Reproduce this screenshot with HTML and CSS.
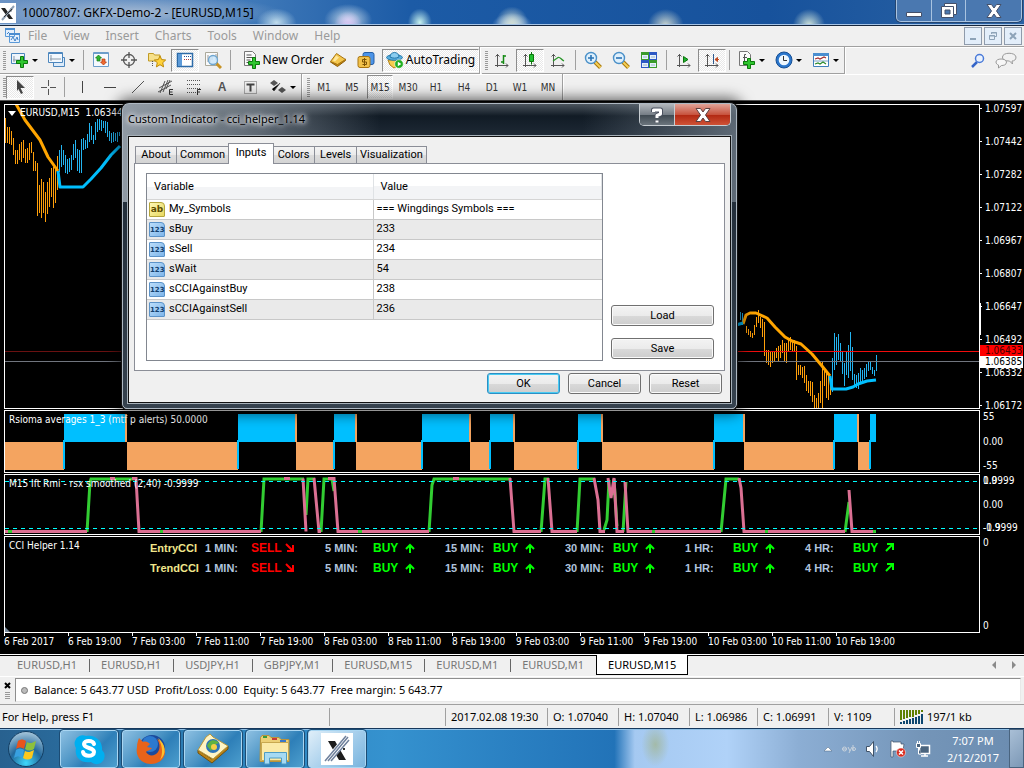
FILE: index.html
```html
<!DOCTYPE html>
<html lang="en">
<head>
<meta charset="utf-8">
<title>10007807: GKFX-Demo-2 - [EURUSD,M15]</title>
<link rel="stylesheet" href="styles.css">
</head>
<body>
<div class="app">
<header class="titlebar">
  <svg class="app-icon" width="16" height="20" viewBox="0 0 16 20"><path fill="#fff" d="M0 0h16v20H0z"/><path fill="#222" d="M1 5h4l8 11H9zM11 5h2l-2 4-2-1z"/><path stroke="#8fa0b4" stroke-width="2" d="M2 17 14 3"/><path stroke="#333" stroke-width="1" d="M4 14 12 6"/></svg>
  <h1 class="title-text">10007807: GKFX-Demo-2 - [EURUSD,M15]</h1>
  <div class="window-buttons">
    <button aria-label="Minimize"><svg width="18" height="16" viewBox="0 0 18 16"><path fill="#fff" stroke="#44506a" d="M1.500 9.500h15v4h-15z"/></svg></button>
    <button aria-label="Restore"><svg width="18" height="16" viewBox="0 0 18 16"><path fill="#fff" stroke="#44506a" fill-rule="evenodd" d="M4.500.500h12v11h-3v3h-12v-11h3zM5 7v4h5V7z"/><path stroke="#44506a" fill="none" d="M4.500 3.500h9v8"/></svg></button>
    <button class="wide" aria-label="Close"><svg width="18" height="16" viewBox="0 0 18 16"><path fill="#fff" stroke="#44506a" d="M2 1.500h4.500L9 5l2.500-3.500H16L11.500 8l4.500 6.500h-4.500L9 11l-2.500 3.500H2L6.500 8z"/></svg></button>
  </div>
</header>

<nav class="menubar">
  <svg class="mdi-icon" width="16" height="16" viewBox="0 0 16 16"><path fill="#e4effc" stroke="#5b9ad8" d="M.500.500h9v8h-9zM4.500 5.500h10v9h-10z"/><path fill="#4a8cd0" d="M0 0h10v2H0zM4 5h11v2H4z"/><path stroke="#3d80c8" fill="none" d="m6 12 2-3 2 4 2-4 1 3M2 6l2-2"/></svg>
  <button>File</button><button>View</button><button>Insert</button><button>Charts</button><button>Tools</button><button>Window</button><button>Help</button>
  <div class="mdi-buttons">
    <button aria-label="Minimize chart"><svg width="10" height="10" viewBox="0 0 10 10"><path stroke="#8da3b8" stroke-width="2" d="M2 8h6"/></svg></button>
    <button aria-label="Restore chart"><svg width="10" height="10" viewBox="0 0 10 10"><path fill="none" stroke="#8da3b8" d="M3.500 3V1.500h5v4H7M1.500 4.500h5v4h-5zM1 5h6M3 2h6"/></svg></button>
    <button aria-label="Close chart"><svg width="10" height="10" viewBox="0 0 10 10"><path stroke="#8da3b8" stroke-width="2" d="m2 2 6 6m0-6L2 8"/></svg></button>
  </div>
</nav>

<div class="toolbar-row">
  <div class="toolbar">
    <i class="grip"></i>
    <button class="tool drop" aria-label="New chart"><svg width="18" height="18" viewBox="0 0 18 18"><path fill="#eef5fc" stroke="#4c86bd" d="M.500 2.500h13v10H.500z"/><path stroke="#8b9aa8" d="M3 5v6M2 9h10"/><path fill="#2fc62f" stroke="#0b7a0b" d="M9.500 5.500h3v4h4v3h-4v4h-3v-4h-4v-3h4z"/></svg><i class="caret"></i></button>
    <button class="tool drop" aria-label="Profiles"><svg width="18" height="18" viewBox="0 0 18 18"><path fill="#dcebfa" stroke="#4c86bd" d="M5.500 6.500h11v9h-11z"/><path fill="#f2f8fe" stroke="#4c86bd" d="M.500 1.500h14v10H.500z"/><path stroke="#4c86bd" d="M1 2.500h13"/><path stroke="#8b9aa8" d="M3 4v6M2 8h11"/></svg><i class="caret"></i></button>
    <i class="sep"></i>
    <button class="tool" aria-label="Market Watch"><svg width="18" height="18" viewBox="0 0 18 18"><path fill="#f5f9fe" stroke="#6c9dca" d="M1.500 1.500h15v14h-15z"/><path stroke="#6c9dca" stroke-width="2" d="M2 2h14"/><path fill="#31b531" stroke="#137a13" stroke-width=".700" d="m6.500 4 3 3H8v3H5V7H3.500z"/><path fill="#f06a31" stroke="#b23808" stroke-width=".700" d="m11.500 14-3-3H10V8h3v3h1.500z"/></svg></button>
    <button class="tool" aria-label="Data Window"><svg width="18" height="18" viewBox="0 0 18 18"><g fill="none" stroke="#555"><circle cx="9" cy="9" r="5.500" stroke-width="1.300"/><path d="M9 1v6m0 4v6M1 9h6m4 0h6" stroke-width="1.300"/></g></svg></button>
    <button class="tool" aria-label="Navigator"><svg width="18" height="18" viewBox="0 0 18 18"><path fill="#f6e08a" stroke="#c19b25" d="M.500 2.500h5l1 1.500h5.500v6H.500z"/><path stroke="#555" stroke-dasharray="1 1" d="M4.500 10v6"/><path fill="#ffd23a" stroke="#bd8908" d="m12 5 1.700 3.600 4 .400-3 2.700.900 4.200L12 13.700l-3.600 2.200.900-4.200-3-2.700 4-.400z"/></svg></button>
    <button class="tool on" aria-label="Terminal"><svg width="18" height="18" viewBox="0 0 18 18"><path fill="#fff" stroke="#2d6ba8" stroke-width="1.500" d="M1.500 2.500h15v13h-15z"/><path fill="#5d9bd8" d="M2 3h4v12H2z"/><path stroke="#2855a0" stroke-dasharray="1 1" d="M8 5.500h7"/><path stroke="#b23d3d" stroke-dasharray="1 1" d="M8 8.500h7"/></svg></button>
    <button class="tool" aria-label="Strategy Tester"><svg width="18" height="18" viewBox="0 0 18 18"><path fill="#fafafa" stroke="#aaa89a" d="M1.500 1.500h12v13h-12z"/><path stroke="#999" d="M4 4v7m2-5v7m2-9v5m4-6v6"/><path stroke="#c89325" stroke-width="3" d="m12 12 5 5"/><circle cx="9" cy="9" r="4.500" fill="#cbe6fa" fill-opacity=".85" stroke="#6ea6d0" stroke-width="1.300"/></svg></button>
    <i class="sep"></i>
    <button class="tool order"><svg width="18" height="18" viewBox="0 0 18 18"><path fill="#fafafa" stroke="#777" d="M1.500.500h8l3 3v11h-11z"/><path stroke="#555" d="M3.500 4h5m-5 2.500h7m-7 2.500h4m-4 2.500h3"/><path fill="#2fc62f" stroke="#0b7a0b" d="M9.500 6.500h3v4h4v3h-4v4h-3v-4h-4v-3h4z"/></svg>New Order</button>
    <button class="tool" aria-label="MetaEditor"><svg width="18" height="18" viewBox="0 0 18 18"><path fill="#c98a10" stroke="#8c5c05" d="m1.500 11 7 4.500 8-6V8l-8 5z"/><path fill="#f4c64c" stroke="#a87410" d="m1.500 10.500 6-8 9 6-8 5z"/><path fill="#ffe79a" d="m7 4.500 3 2-4 4-2-1z"/></svg></button>
    <button class="tool" aria-label="Market"><svg width="18" height="18" viewBox="0 0 18 18"><rect x="6" y="1.500" width="11" height="12" rx="2" fill="#4c94e8" stroke="#245ea6"/><rect x="1" y="5.500" width="12" height="11" rx="2" fill="#f2c24b" stroke="#a87410"/><path fill="none" stroke="#7c5305" d="M9.500 8.500h-4v2.500h4v2.500h-4M7.500 7v8"/></svg></button>
    <button class="tool auto on"><svg width="18" height="18" viewBox="0 0 18 18"><path fill="#f6cd50" stroke="#b18217" d="M2 9h13l-3 5.500L8 17l-4-3z"/><ellipse cx="8.500" cy="6.500" rx="8" ry="2.800" fill="#58aede" stroke="#2478aa"/><path fill="#8acdf0" stroke="#2478aa" d="M4 6c0-6 9-6 9 0-3 1.500-6 1.500-9 0z"/><circle cx="13" cy="13" r="4.300" fill="#1fae1f" stroke="#fff" stroke-width=".600"/><path fill="#fff" d="m11.800 10.800 3.500 2.200-3.500 2.200z"/></svg>AutoTrading</button>
  </div>
  <div class="toolbar">
    <i class="grip"></i>
    <button class="tool" aria-label="Bar chart"><svg width="18" height="18" viewBox="0 0 18 18"><path fill="none" stroke="#555" d="M4.500 3v13M2 14.500h13m-12.500-9 2-2 2 2m6.500 7 2 2-2 2"/><path stroke="#148a14" stroke-width="1.500" fill="none" d="M10.500 4v9M10 5h3M8 11h3"/></svg></button>
    <button class="tool on" aria-label="Candlesticks"><svg width="18" height="18" viewBox="0 0 18 18"><path fill="none" stroke="#555" d="M4.500 3v13M2 14.500h13m-12.500-9 2-2 2 2m6.500 7 2 2-2 2"/><path fill="#20c030" stroke="#0a760a" d="M10.500 1v2.500M10.500 11v2.500M8.500 3.500h4v7h-4z"/></svg></button>
    <button class="tool" aria-label="Line chart"><svg width="18" height="18" viewBox="0 0 18 18"><path fill="none" stroke="#555" d="M4.500 3v13M2 14.500h13m-12.500-9 2-2 2 2m6.500 7 2 2-2 2"/><path fill="none" stroke="#2a962a" stroke-width="1.300" d="M4 10 9 6.500c2-1 3 2 6 3.500"/></svg></button>
    <i class="sep"></i>
    <button class="tool" aria-label="Zoom in"><svg width="18" height="18" viewBox="0 0 18 18"><path stroke="#a7780a" stroke-width="4" d="m11 11 5.500 5.500"/><path stroke="#f6cf58" stroke-width="2" d="m11 11 5.500 5.500"/><circle cx="7" cy="7" r="5.500" fill="#dff0fc" stroke="#4a90c8" stroke-width="1.400"/><path stroke="#2a73b4" stroke-width="1.600" d="M4 7h6M7 4v6"/></svg></button>
    <button class="tool" aria-label="Zoom out"><svg width="18" height="18" viewBox="0 0 18 18"><path stroke="#a7780a" stroke-width="4" d="m11 11 5.500 5.500"/><path stroke="#f6cf58" stroke-width="2" d="m11 11 5.500 5.500"/><circle cx="7" cy="7" r="5.500" fill="#dff0fc" stroke="#4a90c8" stroke-width="1.400"/><path stroke="#2a73b4" stroke-width="1.600" d="M4 7h6"/></svg></button>
    <button class="tool" aria-label="Tile windows"><svg width="18" height="18" viewBox="0 0 18 18"><path fill="#3a9a2c" d="M1 1h8v8H1zM9 9h8v8H9z"/><path fill="#2c58c4" d="M9 1h8v8H9zM1 9h8v8H1z"/><path fill="#e6f1fa" d="M2 4h6v4H2zM10 4h6v4h-6zM2 12h6v4H2zM10 12h6v4h-6z"/><path stroke="#9ab5cc" d="M3 6h4m4 0h4M3 14h4m4 0h4"/></svg></button>
    <i class="sep"></i>
    <button class="tool" aria-label="Auto scroll"><svg width="18" height="18" viewBox="0 0 18 18"><path fill="none" stroke="#555" d="M4.500 3v13M2 14.500h13m-12.500-9 2-2 2 2m6.500 7 2 2-2 2"/><path fill="#20b030" stroke="#0a760a" d="m8.500 5.500 4.500 3-4.500 3z"/></svg></button>
    <button class="tool on" aria-label="Chart shift"><svg width="18" height="18" viewBox="0 0 18 18"><path fill="none" stroke="#555" d="M4.500 3v13M2 14.500h13m-12.500-9 2-2 2 2m6.500 7 2 2-2 2"/><path stroke="#2d5a90" d="M10.500 3v10"/><path stroke="#c04820" fill="#c04820" d="M16 8.500h-4l2.500-2v4l-2.500-2"/></svg></button>
    <i class="sep"></i>
    <button class="tool drop" aria-label="Indicators"><svg width="18" height="18" viewBox="0 0 18 18"><path fill="#fafafa" stroke="#777" d="M1.500.500h8l3 3v11h-11z"/><path stroke="#555" fill="none" d="M8 3.500H6.500v7H5M5 6.500h4"/><path fill="#2fc62f" stroke="#0b7a0b" d="M9.500 7.500h3v3h4v3h-4v4h-3v-4h-4v-3h4z"/></svg><i class="caret"></i></button>
    <button class="tool drop" aria-label="Periods"><svg width="18" height="18" viewBox="0 0 18 18"><circle cx="9" cy="9" r="8" fill="#2a76cc" stroke="#174f94"/><circle cx="9" cy="9" r="5.300" fill="#eef7fe"/><path stroke="#333" fill="none" d="M8.500 5v4.500H12"/></svg><i class="caret"></i></button>
    <button class="tool drop" aria-label="Templates"><svg width="18" height="18" viewBox="0 0 18 18"><path fill="#fff" stroke="#3f7fbc" d="M1.500 2.500h15v13h-15z"/><path fill="#4a8fd0" d="M1 2h16v3H1z"/><path stroke="#7aa2c6" d="M2 10h14"/><path fill="none" stroke="#a33030" stroke-width="1.200" d="m3 8 3-1 2 1 4-2 2 1"/><path fill="none" stroke="#2a8a2a" stroke-width="1.200" d="m3 13 3-1 2 1 3-2 3 2"/></svg><i class="caret"></i></button>
  </div>
  <div class="toolbar-end">
    <button class="tool" aria-label="Search"><svg width="18" height="18" viewBox="0 0 18 18"><path stroke="#3565c8" stroke-width="2.500" d="M8 10 3 15"/><circle cx="10.500" cy="6.500" r="4" fill="#eaf2fd" stroke="#4a7ad8" stroke-width="1.500"/></svg></button>
    <button class="tool" aria-label="Chat"><svg width="22" height="18" viewBox="0 0 22 18"><path fill="#f1f1f1" stroke="#999" d="M7.500 5c0-5 13-5 13.500 0 0 3-2 4-4 4l.500 3-3-3c-4 0-7-1-7-4z"/><path fill="#f7f7f7" stroke="#999" d="M1 10c0-4 10-4 10.500 0 0 3-3 3.500-5 3.500l-3 2.500V13C2 12.500 1 11.500 1 10z"/></svg></button>
  </div>
</div>

<div class="toolbar-row second">
  <div class="toolbar flat">
    <i class="grip"></i>
    <button class="tool on" aria-label="Cursor"><svg width="18" height="18" viewBox="0 0 18 18"><path fill="#444" d="m6 2 8 8H9.500l2.500 5-2 1-2.500-5L6 13z"/></svg></button>
    <button class="tool" aria-label="Crosshair"><svg width="18" height="18" viewBox="0 0 18 18"><path stroke="#555" d="M9.500 2v6m0 3v6M2 9.500h6m3 0h6"/></svg></button>
    <i class="sep tight"></i>
    <button class="tool" aria-label="Vertical line"><svg width="18" height="18" viewBox="0 0 18 18"><path stroke="#444" d="M9.500 3v12"/></svg></button>
    <button class="tool" aria-label="Horizontal line"><svg width="18" height="18" viewBox="0 0 18 18"><path stroke="#444" d="M3 9.500h12"/></svg></button>
    <button class="tool" aria-label="Trendline"><svg width="18" height="18" viewBox="0 0 18 18"><path stroke="#555" d="M3 15 15 3"/></svg></button>
    <button class="tool" aria-label="Equidistant channel"><svg width="18" height="18" viewBox="0 0 18 18"><path stroke="#555" d="M2 10 15 3M1 14 14 7M3 15 8 3M6 14l5-12M9 11l4-9"/><path fill="none" stroke="#333" d="M16 11.500h-3.500v5H16m-3-2.500h2.500"/></svg></button>
    <button class="tool" aria-label="Fibonacci"><svg width="18" height="18" viewBox="0 0 18 18"><path stroke="#555" stroke-dasharray="1 1" d="M2 2.500h14M2 6.500h14M2 10.500h14M2 14.500h9"/><path fill="none" stroke="#333" d="M16 11.500h-3.500V17m0-3H15"/></svg></button>
    <button class="tool letter">A</button>
    <button class="tool" aria-label="Text label"><svg width="18" height="18" viewBox="0 0 18 18"><path fill="none" stroke="#666" stroke-dasharray="1 1" d="M3.500 3.500h12v12h-12z"/><path stroke="#444" stroke-width="2" d="M5.500 6.500h8M9.500 6.500v7"/></svg></button>
    <button class="tool drop" aria-label="Arrows"><svg width="18" height="18" viewBox="0 0 18 18"><path fill="#555" d="m1 5 4-3 4 3-4 3zM9 12l4-3 4 3-4 3z"/><path stroke="#555" d="m3 11 2 2 6-8"/></svg><i class="caret"></i></button>
  </div>
  <div class="toolbar flat frames">
    <i class="grip"></i>
    <button>M1</button><button>M5</button><button class="on">M15</button><button>M30</button><button>H1</button><button>H4</button><button>D1</button><button>W1</button><button>MN</button>
  </div>
</div>

<main class="workspace">
  <section class="pane price-pane">
    <svg class="plot" width="975" height="303" viewBox="5 105 975 303">
      <g fill="none" stroke="#ff9f0a" shape-rendering="crispEdges">
        <path d="M5.500 118v25M7.500 127v16M9.500 127v17M11.500 131v14M13.500 138v17M15.500 150v14M17.500 150v14M19.500 144v16M21.500 142v20M23.500 140v18M25.500 149v14M27.500 148v15M29.500 143v17M31.500 142v11M33.500 152v19M35.500 161v10M37.500 163v53M39.500 185v28M41.500 179v39M43.500 182v31M45.500 192v30M47.500 182v32M49.500 178v29M51.500 168v29M53.500 167v41M55.500 168v35M57.500 156v34"/>
        <path d="M744.500 316v7M746.500 326v7M748.500 329v6M750.500 331v6M752.500 333v5M754.500 325v10M756.500 317v10M758.500 310v13M760.500 317v11M762.500 319v18M764.500 322v34M766.500 350v13M768.500 350v15M770.500 351v16M772.500 351v12M774.500 352v10M776.500 348v10M778.500 346v16M780.500 345v13M782.500 340v13M784.500 343v19M786.500 343v20M788.500 340v12M790.500 337v13M792.500 340v12M794.500 340v12M796.500 346v34M798.500 365v10M800.500 365v10M802.500 367v11M804.500 366v17M806.500 375v16M808.500 381v12M810.500 381v15M812.500 382v20M814.500 395v13M816.500 398v10M818.500 393v15M820.500 381v22M822.500 362v46M824.500 368v18M826.500 371v27M828.500 376v24M830.500 376v19"/>
      </g>
      <g fill="none" stroke="#23b4f0" shape-rendering="crispEdges">
        <path d="M59.500 150v22M61.500 145v22M63.500 150v15M65.500 155v18M67.500 159v15M69.500 158v14M71.500 155v15M73.500 144v16M75.500 140v18M77.500 149v22M79.500 150v23M81.500 139v34M83.500 138v12M85.500 140v9M87.500 134v14M89.500 123v19M91.500 126v14M93.500 135v9M95.500 122v18M97.500 119v13M99.500 119v11M101.500 120v11M103.500 121v7M105.500 121v12M107.500 122v15M109.500 131v10M111.500 133v10M113.500 132v10M115.500 133v8M117.500 132v10M119.500 132v4"/>
        <path d="M740.500 312v8M742.500 313v12M832.500 358v34M834.500 333v37M836.500 337v28M838.500 334v26M840.500 343v19M842.500 352v22M844.500 363v23M846.500 352v23M848.500 345v33M850.500 332v39M852.500 347v33M854.500 374v11M856.500 375v13M858.500 373v16M860.500 368v14M862.500 370v13M864.500 368v11M866.500 364v13M868.500 362v9M870.500 362v8M872.500 367v7M874.500 370v6M876.500 355v16"/>
      </g>
      <path stroke="#6a1111" d="M5 351.500h120"/><path stroke="#f20d0d" d="M730 351.500h250"/><path stroke="#70757e" d="M5 361.500h975"/>
      <g fill="none" stroke-width="3" stroke-linejoin="round">
        <path stroke="#ffa500" d="M16 104l9 16 15 20 8 17 10 14M743 324l3-9 4-2h6l11 5 8 9 10 10 7 4 9 3 11 10 10 12 8 10"/>
        <path stroke="#00bfff" d="M58 171l2 16h23l8-8 10-11 10-13 9-9M736 325l7-2M830 376l2 13h14l7-2 5-3 9-3 9-1"/>
      </g>
    </svg>
    <div class="symbol"><svg width="8" height="5" viewBox="0 0 8 5"><path fill="#fff" d="M0 0h8L4 5z"/></svg>EURUSD,M15&nbsp; 1.06344</div>
  </section>
  <aside class="scale price-scale">
    <i class="range"></i>
    <ol><li>1.07597</li><li>1.07442</li><li>1.07282</li><li>1.07122</li><li>1.06967</li><li>1.06807</li><li>1.06647</li><li>1.06492</li><li>1.06332</li><li>1.06172</li></ol>
    <b class="ask">1.06433</b><b class="bid">1.06385</b>
  </aside>

  <section class="pane">
    <svg class="plot" width="975" height="61" viewBox="5 411 975 61" shape-rendering="crispEdges">
      <path fill="#f4a460" d="M5 442h59v28H5zM127 442h111v28H127zM296 442h38v28h-38zM356 442h66v28h-66zM470 442h20v28h-20zM514 442h64v28h-64zM602 442h112v28H602zM744 442h90v28h-90zM858 442h12v28h-12zM125 414h2v28h-2zM295 414h2v28h-2zM355 414h2v28h-2zM469 414h2v28h-2zM513 414h2v28h-2zM601 414h2v28h-2zM743 414h2v28h-2zM857 414h2v28h-2z"/>
      <path fill="#00bfff" d="M64 414h61v28H64zM238 414h57v28h-57zM334 414h21v28h-21zM422 414h47v28h-47zM490 414h23v28h-23zM578 414h23v28h-23zM714 414h29v28h-29zM834 414h23v28h-23zM870 414h6v28h-6zM63 440h2v29h-2zM237 440h2v29h-2zM333 440h2v29h-2zM421 440h2v29h-2zM489 440h2v29h-2zM577 440h2v29h-2zM713 440h2v29h-2zM833 440h2v29h-2zM869 440h2v29h-2z"/>
    </svg>
    <div class="pane-name">Rsioma averages 1_3 (mtf p alerts) 50.0000</div>
  </section>
  <aside class="scale spread"><span>55</span><span>0.00</span><span>-55</span></aside>

  <section class="pane">
    <svg class="plot" width="975" height="59" viewBox="5 475 975 59">
      <g fill="none" stroke-width="3">
        <path stroke="#32cd32" d="M87 532l3-50 1-3h43M261 532l3-53h40M306 515l2-36h7M321 532l3-53h8l2 12M429 532l3-47 2-6h77M541 532l4-53h4M577 532l3-53h15M604 530l3-10 2-40M613 495l1-16 3 47M623 532l3-50M721 532l5-53h13M845 532l4-30"/>
        <path stroke="#db7093" d="M5 531.500h82M110 478.500h5M132 478.500h4l3 53h122M284 478.500h6M303 478.500l3 53M314 478l5 53.500h2M328 478.500h6l4 53h91M453 478.500h6M510 478l4 53.500h27M548 478l4 53.500h25M594 478l4 22 2 31.500h5M608 478l3 20 3-20 3 53.500h7M625 482l3 49.500h93M739 478l2 10 3 43.500h101M849 490l3 41.500h24"/>
        <path stroke="#32cd32" d="M8 531.500h4M160 531.500h3M358 531.500h4M652 531.500h3M765 531.500h3M873 531.500h3"/>
      </g>
      <path stroke="#0ff" stroke-dasharray="4 4" shape-rendering="crispEdges" d="M5 481.500h975M5 528.500h975"/>
    </svg>
    <div class="pane-name">M15 Ift Rmi - rsx smoothed (2,40) -0.9999</div>
  </section>
  <aside class="scale spread"><span class="double"><i>1.0</i>0.9999</span><span>0.00</span><span class="double"><i>-1.9</i>-0.9999</span></aside>

  <section class="pane">
    <div class="pane-name">CCI Helper 1.14</div>
    <table class="signals">
      <tr><th>EntryCCI</th>
        <td>1 MIN:</td><td class="sell">SELL</td><td class="sell"><svg width="10" height="10" viewBox="0 0 10 10"><path d="m1 1 6 6M2 8h6V2" /></svg></td>
        <td>5 MIN:</td><td class="buy">BUY</td><td class="buy"><svg width="10" height="10" viewBox="0 0 10 10"><path d="M5 10V2M1 6l4-4 4 4"/></svg></td>
        <td>15 MIN:</td><td class="buy">BUY</td><td class="buy"><svg width="10" height="10" viewBox="0 0 10 10"><path d="M5 10V2M1 6l4-4 4 4"/></svg></td>
        <td>30 MIN:</td><td class="buy">BUY</td><td class="buy"><svg width="10" height="10" viewBox="0 0 10 10"><path d="M5 10V2M1 6l4-4 4 4"/></svg></td>
        <td>1 HR:</td><td class="buy">BUY</td><td class="buy"><svg width="10" height="10" viewBox="0 0 10 10"><path d="M5 10V2M1 6l4-4 4 4"/></svg></td>
        <td>4 HR:</td><td class="buy">BUY</td><td class="buy"><svg width="10" height="10" viewBox="0 0 10 10"><path d="m1 8 6-6M2 1h6v6"/></svg></td></tr>
      <tr><th>TrendCCI</th>
        <td>1 MIN:</td><td class="sell">SELL</td><td class="sell"><svg width="10" height="10" viewBox="0 0 10 10"><path d="m1 1 6 6M2 8h6V2" /></svg></td>
        <td>5 MIN:</td><td class="buy">BUY</td><td class="buy"><svg width="10" height="10" viewBox="0 0 10 10"><path d="M5 10V2M1 6l4-4 4 4"/></svg></td>
        <td>15 MIN:</td><td class="buy">BUY</td><td class="buy"><svg width="10" height="10" viewBox="0 0 10 10"><path d="M5 10V2M1 6l4-4 4 4"/></svg></td>
        <td>30 MIN:</td><td class="buy">BUY</td><td class="buy"><svg width="10" height="10" viewBox="0 0 10 10"><path d="M5 10V2M1 6l4-4 4 4"/></svg></td>
        <td>1 HR:</td><td class="buy">BUY</td><td class="buy"><svg width="10" height="10" viewBox="0 0 10 10"><path d="M5 10V2M1 6l4-4 4 4"/></svg></td>
        <td>4 HR:</td><td class="buy">BUY</td><td class="buy"><svg width="10" height="10" viewBox="0 0 10 10"><path d="m1 8 6-6M2 1h6v6"/></svg></td></tr>
    </table>
    <i class="corner"></i>
  </section>
  <aside class="scale spread"><span>0</span><span>0</span></aside>

  <ol class="time-axis"><li>6 Feb 2017</li><li>6 Feb 19:00</li><li>7 Feb 03:00</li><li>7 Feb 11:00</li><li>7 Feb 19:00</li><li>8 Feb 03:00</li><li>8 Feb 11:00</li><li>8 Feb 19:00</li><li>9 Feb 03:00</li><li>9 Feb 11:00</li><li>9 Feb 19:00</li><li>10 Feb 03:00</li><li>10 Feb 11:00</li><li>10 Feb 19:00</li></ol>

  <div class="dialog" role="dialog" aria-labelledby="dlg-title">
    <div class="dialog-title">
      <h2 id="dlg-title">Custom Indicator - cci_helper_1.14</h2>
      <div class="dialog-buttons">
        <button aria-label="Help"><svg width="14" height="18" viewBox="0 0 14 18"><g fill="none" stroke-linejoin="round"><path stroke="#4c5260" stroke-width="5" d="M3.500 6V4h7v4L7 9.500V12M7 14.500v2"/><path stroke="#fff" stroke-width="3" d="M3.500 6V4h7v4L7 9.500V12M7 14.500v2"/></g></svg></button>
        <button class="close" aria-label="Close"><svg width="18" height="16" viewBox="0 0 18 16"><path fill="#fff" stroke="#5a4040" d="M2 1.500h4.500L9 5l2.500-3.500H16L11.500 8l4.500 6.500h-4.500L9 11l-2.500 3.500H2L6.500 8z"/></svg></button>
      </div>
    </div>
    <div class="dialog-body">
      <div class="tabs" role="tablist">
        <button role="tab">About</button><button role="tab">Common</button><button role="tab" class="active" aria-selected="true">Inputs</button><button role="tab">Colors</button><button role="tab">Levels</button><button role="tab">Visualization</button>
      </div>
      <div class="tab-page">
        <div class="list">
          <table>
            <thead><tr><th>Variable</th><th>Value</th></tr></thead>
            <tbody>
              <tr><td><i class="type text">ab</i>My_Symbols</td><td>=== Wingdings Symbols ===</td></tr>
              <tr><td><i class="type">123</i>sBuy</td><td>233</td></tr>
              <tr><td><i class="type">123</i>sSell</td><td>234</td></tr>
              <tr><td><i class="type">123</i>sWait</td><td>54</td></tr>
              <tr><td><i class="type">123</i>sCCIAgainstBuy</td><td>238</td></tr>
              <tr><td><i class="type">123</i>sCCIAgainstSell</td><td>236</td></tr>
            </tbody>
          </table>
        </div>
        <div class="side"><button class="push">Load</button><button class="push">Save</button></div>
      </div>
      <div class="actions"><button class="push default">OK</button><button class="push">Cancel</button><button class="push">Reset</button></div>
    </div>
  </div>
</main>

<div class="chart-tabs">
  <button>EURUSD,H1</button><button>EURUSD,H1</button><button>USDJPY,H1</button><button>GBPJPY,M1</button><button>EURUSD,M15</button><button>EURUSD,M1</button><button>EURUSD,M1</button><button class="active">EURUSD,M15</button>
  <div class="tab-scroll"><svg width="24" height="8" viewBox="0 0 24 8"><path fill="#8a8a8a" d="M4 0v8L0 4zM20 0v8l4-4z"/></svg></div>
</div>

<section class="terminal">
  <div class="terminal-side"><button aria-label="Close terminal"><svg width="7" height="7" viewBox="0 0 7 7"><path stroke="#000" stroke-width="2" d="m1 1 5 5m0-5L1 6"/></svg></button><i></i></div>
  <p class="balance"><i class="dot"></i>Balance: 5 643.77 USD&nbsp; Profit/Loss: 0.00&nbsp; Equity: 5 643.77&nbsp; Free margin: 5 643.77</p>
</section>

<footer class="status">
  <span class="help">For Help, press F1</span><span class="blank"></span><span class="when">2017.02.08 19:30</span><span>O: 1.07040</span><span>H: 1.07040</span><span class="narrow">L: 1.06986</span><span>C: 1.06991</span><span class="volume">V: 1109</span>
  <span class="traffic"><svg width="24" height="14" viewBox="0 0 24 14"><path stroke="#5f8000" stroke-width="2" d="M1 0v10M4 0v9M7 0v8M10 0v7M13 0v7M16 0v5M19 0v4M22 0v2"/><path stroke="#0d4770" stroke-width="2" d="M1 12v2M4 11v3M7 10v4M10 9v5M13 8v6M16 7v7M19 6v8M22 4v10"/></svg>197/1 kb</span>
</footer>

<div class="taskbar">
  <button class="start" aria-label="Start"><svg width="38" height="38" viewBox="0 0 38 38"><defs><radialGradient id="orb" cx=".5" cy=".9" r=".9"><stop offset="0" stop-color="#3fd8fc"/><stop offset=".5" stop-color="#22689c"/><stop offset="1" stop-color="#a9c8dc"/></radialGradient></defs><circle cx="19" cy="19" r="17.500" fill="url(#orb)" stroke="#123e63"/><path fill="#e8541c" d="M11 11c3-2 5-2 8 0l-2 8c-3-2-5-2-8 0z"/><path fill="#8cc03c" d="M20 12c3 2 5 1 9-1l-2 8c-3 2-6 2-9 0z"/><path fill="#38a0e0" d="M9 20c3-2 5-2 8 0l-2 8c-3-2-5-2-8 0z"/><path fill="#fcc81c" d="M18 21c3 2 5 1 9-1l-2 8c-3 2-6 2-9 0z"/></svg></button>
  <button class="task" aria-label="Skype"><svg width="32" height="32" viewBox="0 0 32 32"><path fill="#00aff0" d="M2 8A8 8 0 0 1 13 3c9-2 17 5 16 14a8 8 0 0 1-11 12C8 31 1 24 3 15a8 8 0 0 1-1-7z"/><path fill="none" stroke="#fff" stroke-width="4" stroke-linecap="round" d="M21 11c-1-4-10-4-10 0 0 5 10 3 10 8 0 5-10 5-11 0"/></svg></button>
  <button class="task" aria-label="Firefox"><svg width="32" height="32" viewBox="0 0 32 32"><circle cx="17" cy="15" r="13" fill="#1b4a9c"/><circle cx="15" cy="11" r="8" fill="#2c79cf"/><path fill="#e8631a" d="M4 5l4 4c3-1 5 0 7 2l-3 3 5 1c-2 3-5 2-6 4 3 5 9 4 12 0 3-5 1-10-1-13 6 3 8 9 8 14-1 7-7 11-14 11C6 31 0 23 2 14c0-4 1-6 2-9z"/><path fill="#fbc02d" d="M23 5c8 6 9 16 2 22 3-6 3-14-2-22z"/></svg></button>
  <button class="task" aria-label="Expert Advisor"><svg width="32" height="32" viewBox="0 0 32 32"><path fill="#b98317" stroke="#74500a" d="m1 20 14 10 16-14v-3L15 26 1 17z"/><path fill="#fff4c4" stroke="#b8973c" d="m1 17 8-13 4-3 3 3 15 9-15 13z"/><circle cx="16" cy="13" r="7" fill="#2d74b8"/><path fill="#5fb243" d="M10 13c2-7 9-7 12-3l-5 2-3 6z"/><circle cx="17" cy="14" r="3" fill="#f4cf45"/></svg></button>
  <button class="task" aria-label="Explorer"><svg width="32" height="32" viewBox="0 0 32 32"><path fill="#eccf76" stroke="#b8933a" d="M1.500 4.500 3 2.500h7l2 2h8l2 2h8v22h-29z"/><path fill="#fbeaa8" stroke="#c8a850" d="M2.500 9.500h27v18h-27z"/><path stroke="#3a9a3a" stroke-width="2" d="M4 4h4"/><path stroke="#c83a3a" stroke-width="2" d="M13 6h5"/><path stroke="#3a78c8" stroke-width="2" d="M21 8h6"/><path fill="#a6daf4" stroke="#4f9cc4" d="M5.500 31V19.500h22V31h-5v-6h-12v6z"/></svg></button>
  <button class="task current" aria-label="MetaTrader"><svg width="32" height="32" viewBox="0 0 32 32"><path fill="#fff" d="M0 0h32v32H0z"/><path fill="#1c1c1c" d="M7 8h7l11 19h-7zM20 7h5l-4 8-3-3zM7 25l5-6 2 3-3 4z"/><path stroke="#fff" stroke-width="6" d="M6 28 27 3"/><path stroke="#6f809c" stroke-width="1.500" d="M4 28 25 3M7 28 27 4M10 28 28 7"/><path fill="#333" d="M22 15h2v2h-2z"/></svg></button>
  <div class="tray">
    <svg width="10" height="6" viewBox="0 0 10 6"><path fill="#fff" stroke="#4b6580" stroke-width=".500" d="m1 5 4-4 4 4z"/></svg>
    <svg width="16" height="12" viewBox="0 0 16 12"><g fill="none" stroke="#c8d2dc"><circle cx="3.500" cy="6" r="2"/><path d="M1 6h5M7 4l2 4m2-4-3 6M12 2v6"/><circle cx="13" cy="6" r="1.500"/></g></svg>
    <svg width="16" height="18" viewBox="0 0 16 18"><path fill="#fff" stroke="#3f5268" d="M1.500 6.500h3l4-5v15l-4-5h-3z"/><path fill="none" stroke="#fff" stroke-width="1.300" d="M11 6c1.500 2 1.500 4 0 6"/></svg>
    <svg width="18" height="18" viewBox="0 0 18 18"><path fill="#fff" stroke="#3f5268" stroke-width=".700" d="M2 1h2v1h8v2h3l-1 7H4v6H2z"/><circle cx="12" cy="12.500" r="4.500" fill="#d9291c" stroke="#fff" stroke-width=".500"/><path stroke="#fff" stroke-width="1.600" d="m10 10.500 4 4m0-4-4 4"/></svg>
    <svg width="16" height="18" viewBox="0 0 16 18"><path fill="#4b657f" stroke="#fff" stroke-width="1.500" d="M4.500 5.500h10v8h-10z"/><path stroke="#fff" stroke-width="1.500" d="M6 16h7M10 13v3"/><path fill="#4b657f" stroke="#fff" d="M1.500 3.500h4v4h-4zM2.500 1v2M4.500 1v2M3.500 8v6H6"/></svg>
  </div>
  <div class="clock"><span>7:07 PM</span><span>2/12/2017</span></div>
  <button class="peek" aria-label="Show desktop"></button>
</div>
</div>
</body>
</html>
```
FILE: styles.css
```css
* { box-sizing: border-box; }
body { margin: 0; font: 11px/16px "Noto Sans", sans-serif; background: #000; color: #000; }
h1, h2, p, ol { margin: 0; padding: 0; font-size: inherit; font-weight: normal; list-style: none; }
button { font: inherit; color: inherit; margin: 0; padding: 0; border: 0; background: none; }
svg { display: block; flex: none; }
.app { display: flex; flex-direction: column; min-height: 100vh; background: #f0f0f0; }

.titlebar { display: flex; align-items: center; height: 26px; font-size: 12px; border-bottom: 1px solid #16263c; box-shadow: inset 0 -1px #a6c4e6;
  background:
    radial-gradient(ellipse 12px 14px at 41% 90%, #c8f2ee, transparent),
    radial-gradient(ellipse 20px 14px at 27% 90%, #c0dcec, transparent),
    radial-gradient(ellipse 14px 14px at 34% 100%, #d9c4f4, transparent),
    radial-gradient(ellipse 24px 16px at 34% 80%, #cfe0ee, transparent),
    radial-gradient(ellipse 16px 16px at 50% 90%, #cddbd4, transparent),
    radial-gradient(ellipse 20px 12px at 50% 100%, #d6ecff, transparent),
    radial-gradient(ellipse 18px 16px at 65% 100%, #c9d4cf, transparent),
    radial-gradient(ellipse 16px 16px at 79% 100%, #cfe3da, transparent),
    radial-gradient(ellipse 150px 18px at 13% 50%, #a4b9d3, transparent),
    linear-gradient(90deg, #6c93c4, #3e78b8 25%, #1c5ba6 40%, #17529c 75%, #2b63a4); }
.app-icon { margin-right: 6px; }
.title-text { flex: 1; }
.window-buttons { display: flex; align-self: flex-start; margin-right: 2px; height: 22px; border: 1px solid #a9c3e0; border-top: 0; border-radius: 0 0 5px 5px; background: #4a78b0; box-shadow: 0 0 0 1px #25456f; }
.window-buttons button { width: 34px; display: grid; place-items: center; border-left: 1px solid #a9c3e0; }
.window-buttons button:first-child { border-left: 0; }
.window-buttons .wide { width: 56px; }

.menubar { display: flex; align-items: center; height: 21px; font-size: 12px; border-bottom: 1px solid #a0a0a0; color: #9a9a9a; }
.mdi-icon { margin: 0 7px 0 5px; }
.menubar > button { margin-right: 16px; }
.mdi-buttons { display: flex; gap: 2px; margin: 0 2px 0 auto; }
.mdi-buttons button { width: 18px; height: 18px; display: grid; place-items: center; border: 1px solid #8f9bab; background: #e3eefa; }

.toolbar-row { display: flex; height: 27px; font-size: 12px; box-shadow: inset 0 1px #fff; }
.toolbar { display: flex; align-items: center; padding-left: 3px; border-right: 1px solid #a0a0a0; border-bottom: 1px solid #a0a0a0; box-shadow: 1px 1px #fff; }
.toolbar + .toolbar { margin-left: 2px; }
.toolbar.flat { border-bottom: 0; }
.second { height: 26px; }
.grip { width: 3px; height: 19px; background: repeating-linear-gradient(#999 0 1px, transparent 1px 2px); }
.tool { display: flex; align-items: center; justify-content: center; width: 28px; height: 23px; }
.tool.drop { width: 37px; justify-content: space-between; padding: 0 5px; }
.tool.on, .frames .on { border: 1px solid; border-color: #8c8c8c #fff #fff #8c8c8c; background: repeating-conic-gradient(#fff 0 25%, #e8e8e8 0 50%) 0 0 / 2px 2px; }
.tool.order { width: 90px; gap: 2px; justify-content: flex-end; white-space: nowrap; }
.tool.auto { width: 97px; gap: 2px; margin-left: 2px; }
.tool.letter { font: bold 12px "Liberation Sans", sans-serif; color: #555; }
.caret { border: solid transparent; border-width: 3px 3px 0; border-top-color: #000; }
.sep { width: 1px; height: 20px; margin: 0 3px; background: #a0a0a0; }
.sep.tight { margin: 0 3px 0 2px; }
.toolbar-end { display: flex; align-items: center; margin-left: auto; padding-right: 4px; }
.frames button { width: 28px; height: 24px; font: 10px "DejaVu Sans Condensed", sans-serif; color: #333; }
.frames .on { width: 26px; margin: 0 1px; }

.workspace { position: relative; flex: 1; display: grid; grid-template-columns: 1fr 44px; grid-template-rows: minmax(305px, 1fr) 63px 61px 97px 19px; row-gap: 1px;
  padding: 3px 0 1px 4px; background: #000; color: #fff; border-top: 1px solid #555; border-bottom: 1px solid #fff; font: 10px/12px "DejaVu Sans Condensed", sans-serif; }
.pane { position: relative; overflow: hidden; border: 1px solid #fff; }
.pane-name, .symbol { position: absolute; top: 3px; left: 4px; }
.symbol { display: flex; align-items: center; gap: 4px; left: 3px; top: 2px; }
.scale { position: relative; }
.price-scale ol { display: flex; flex-direction: column; justify-content: space-between; height: 309px; margin: -1px 0 -4px; }
.price-scale li, .ask, .bid { height: 12px; padding-left: 5px; }
.price-scale li::before { content: ""; float: left; width: 2px; height: 1px; margin: 5px 0 0 -5px; background: #fff; }
.ask, .bid { position: absolute; left: 0; right: 1px; top: 241px; font-weight: normal; background: #f00; color: #400; }
.bid { top: 252px; background: #fff; color: #000; }
.range { position: absolute; left: -1px; top: 199px; width: 2px; height: 32px; background: #fff; }
.spread { display: flex; flex-direction: column; justify-content: space-between; padding: 1px 0 1px 3px; }
.double { position: relative; }
.double i { position: absolute; left: 0; font-style: normal; }
.signals { margin: 1px 0 0 145px; border-collapse: collapse; table-layout: fixed; width: 775px; font: bold 11px/20px "Liberation Sans", sans-serif; color: #b0c4de; }
.signals th { width: 55px; padding: 0; text-align: left; color: #f0e68c; white-space: nowrap; }
.signals td { padding: 0; height: 20px; }
.signals td:nth-child(3n + 2) { width: 46px; }
.signals td:nth-child(3n + 3) { width: 34px; font-size: 12px; }
.signals td:nth-child(3n + 4) { width: 40px; }
.signals td.buy:nth-child(3n + 3) { padding-left: 2px; }
.signals .buy { color: #0f0; }
.signals .sell { color: #f00; }
.signals path { fill: none; stroke: currentColor; stroke-width: 2; }
.corner { position: absolute; left: 0; bottom: 0; border: solid transparent; border-width: 5px 0 0 5px; border-left-color: #778899; }
.time-axis { grid-column: 1 / -1; display: flex; margin-top: -1px; }
.time-axis li { width: 64px; white-space: nowrap; }
.time-axis li::before { content: ""; display: block; width: 1px; height: 3px; background: #fff; }

.dialog { position: absolute; left: 122px; top: 2px; width: 615px; color: #000; border: 1px solid #aeb8c2; border-radius: 7px 7px 5px 5px; padding: 0 5px 5px; box-shadow: 0 0 0 1px #111, 0 0 14px 5px rgba(0, 0, 0, .6);
  background: linear-gradient(90deg, rgba(150, 160, 170, .95), rgba(150, 160, 170, .55) 22%, transparent 42%, transparent 75%, rgba(110, 122, 134, .8)) 0 0 / 100% 98px no-repeat, linear-gradient(#4b545d, #111b25 12px, #1d2834 30px, #36424e); font: 11px/14px Roboto, sans-serif; }
.dialog-title { display: flex; justify-content: space-between; height: 32px; font: 11px/30px "Noto Sans", sans-serif; }
.dialog-title h2 { text-shadow: 0 0 4px #fff, 0 0 6px #fff, 0 0 8px #dde; }
.dialog-buttons { display: flex; height: 22px; border: 1px solid #c7cdd2; border-top: 0; border-radius: 0 0 5px 5px; overflow: hidden; }
.dialog-buttons button { width: 34px; display: grid; place-items: center; background: linear-gradient(#b2b7bc, #777f87 50%, #3d474f 50%, #6c757d); }
.dialog-buttons .close { width: 56px; border-left: 1px solid #c7cdd2; background: linear-gradient(#e0a398, #c8543f 50%, #b02610 50%, #cf5236); }
.dialog-body { background: #f0f0f0; border: 1px solid #111; outline: 1px solid #a6b0b8; padding: 6px 5px 8px; }
.tabs { display: flex; align-items: flex-end; height: 20px; padding-left: 1px; }
.tabs button { min-width: 42px; height: 17px; padding: 0 3px; border: 1px solid #8b8e97; border-width: 1px 1px 0 0; background: linear-gradient(#f4f4f4, #eaeaea 50%, #dcdcdc 50%, #d4d4d4); }
.tabs button:first-child { border-left-width: 1px; }
.tabs .active { position: relative; min-width: 46px; height: 21px; margin: 0 -1px -1px; padding-bottom: 3px; border-left-width: 1px; background: #fff; }
.tab-page { display: flex; gap: 8px; padding: 9px 10px 9px 11px; border: 1px solid #8b8e97; background: #fff; }
.list { flex: 1; height: 188px; border: 1px solid #828790; }
.list table { width: 100%; border-collapse: collapse; table-layout: fixed; }
.list th { height: 25px; padding: 2px 7px 0; font-weight: normal; text-align: left; border-right: 1px solid #dfe2e5; border-bottom: 1px solid #d5d5d5; background: linear-gradient(#fff 50%, #f3f4f6 50%); }
.list th:first-child { width: 226px; }
.list td { height: 20px; padding: 0 3px; border: 1px solid #c8c8c8; border-width: 0 1px 1px 0; }
.list td:first-child { padding-left: 2px; }
.list td:last-child { border-right: 0; }
.list tbody tr:nth-child(even) { background: #eaeaea; }
.type { float: left; width: 16px; height: 15px; margin-right: 4px; border: 1px solid #5c93c8; border-radius: 1px 4px 1px 1px; background: linear-gradient(135deg, #b9dcfa, #7fb6ea); color: #12406e; font: bold 7px/14px "DejaVu Sans", sans-serif; text-align: center; }
.type.text { border-color: #b5a53c; background: linear-gradient(135deg, #fdf7b4, #e8d860); color: #5c4c00; font-size: 9px; line-height: 13px; }
.side { width: 103px; display: flex; flex-direction: column; justify-content: flex-end; gap: 12px; padding-bottom: 2px; }
.push { height: 21px; border: 1px solid #707070; border-radius: 3px; background: linear-gradient(#f3f3f3, #ebebeb 50%, #dadada 50%, #cdcdcd); box-shadow: inset 0 0 0 1px #fafafa; }
.push.default { border-color: #2c8fc4; box-shadow: inset 0 0 0 1px #49cbf2; }
.actions { display: flex; justify-content: flex-end; gap: 8px; padding: 2px 3px 0 0; }
.actions .push { width: 73px; }

.chart-tabs { display: flex; height: 22px; border-top: 1px solid #000; border-bottom: 1px solid #fff; padding-left: 5px; color: #777; }
.chart-tabs button { position: relative; height: 18px; padding: 0 12px; }
.chart-tabs button + button:not(.active)::before { content: ""; position: absolute; left: 0; top: 3px; width: 1px; height: 13px; background: #666; }
.chart-tabs .active { margin-top: -1px; height: 20px; padding: 0 11px; border: 1px solid #000; border-top: 0; background: #fff; color: #000; }
.tab-scroll { margin: 5px 8px 0 auto; }
.terminal { display: flex; gap: 3px; height: 28px; padding: 1px 3px 2px 2px; border-bottom: 1px solid #a0a0a0; }
.terminal-side { display: flex; flex-direction: column; align-items: center; gap: 3px; width: 10px; padding-top: 4px; }
.terminal-side i { width: 5px; height: 8px; background: repeating-linear-gradient(#999 0 1px, transparent 1px 2px); }
.balance { flex: 1; display: flex; align-items: center; white-space: pre; background: #fff; border: 1px solid #8e8e8e; border-color: #8e8e8e #e8e8e8 #e8e8e8 #8e8e8e; padding-left: 5px; }
.dot { width: 7px; height: 7px; margin-right: 6px; border-radius: 50%; border: 1px solid #777; background: #bbb; }
.status { display: flex; align-items: center; height: 24px; border-bottom: 1px solid #17385c; }
.status span { display: flex; align-items: center; height: 18px; width: 71px; padding-left: 5px; border-left: 1px solid #a0a0a0; white-space: nowrap; }
.status .help { flex: 1; width: auto; border: 0; padding-left: 2px; }
.status .blank { width: 116px; }
.status .when { width: 102px; }
.status .narrow { width: 68px; }
.status .volume { width: 66px; }
.status .traffic { width: 130px; gap: 3px; }

.taskbar { display: flex; align-items: center; height: 39px; box-shadow: inset 0 1px #8fc0e6; color: #fff;
  background: radial-gradient(ellipse 14px 22px at 64% 40%, rgba(160, 175, 120, .6), transparent), linear-gradient(90deg, #28618f, #2d83bc 22%, #3592cf 38%, #2a80c2 50%, #2273b8 60%, #a5c9f1 62%, #b0d2f8 71%, #8caed4 78%, #7495b8 90%, #6b8cb0); }
.start { width: 52px; margin-right: 8px; display: grid; place-items: center; }
.task { width: 58px; height: 38px; margin-right: 4px; display: grid; place-items: center; border: 1px solid #a9d6f2; border-radius: 3px; background: linear-gradient(135deg, #8dc0e2, #4a93c4 45%, #2e7fb8 60%, #4d9fce); outline: 1px solid #1c4c74; outline-offset: 0; }
.task.current { background: linear-gradient(135deg, #e0eff9, #a9d0ec 50%, #78b4de); }
.tray { display: flex; align-items: center; gap: 8px; margin-left: auto; padding-right: 9px; }
.clock { width: 66px; display: flex; flex-direction: column; align-items: center; line-height: 17px; }
.peek { width: 15px; height: 39px; margin-left: 3px; border: 1px solid #49647f; background: linear-gradient(135deg, #a9bfd6, #7c98b6); }
```
